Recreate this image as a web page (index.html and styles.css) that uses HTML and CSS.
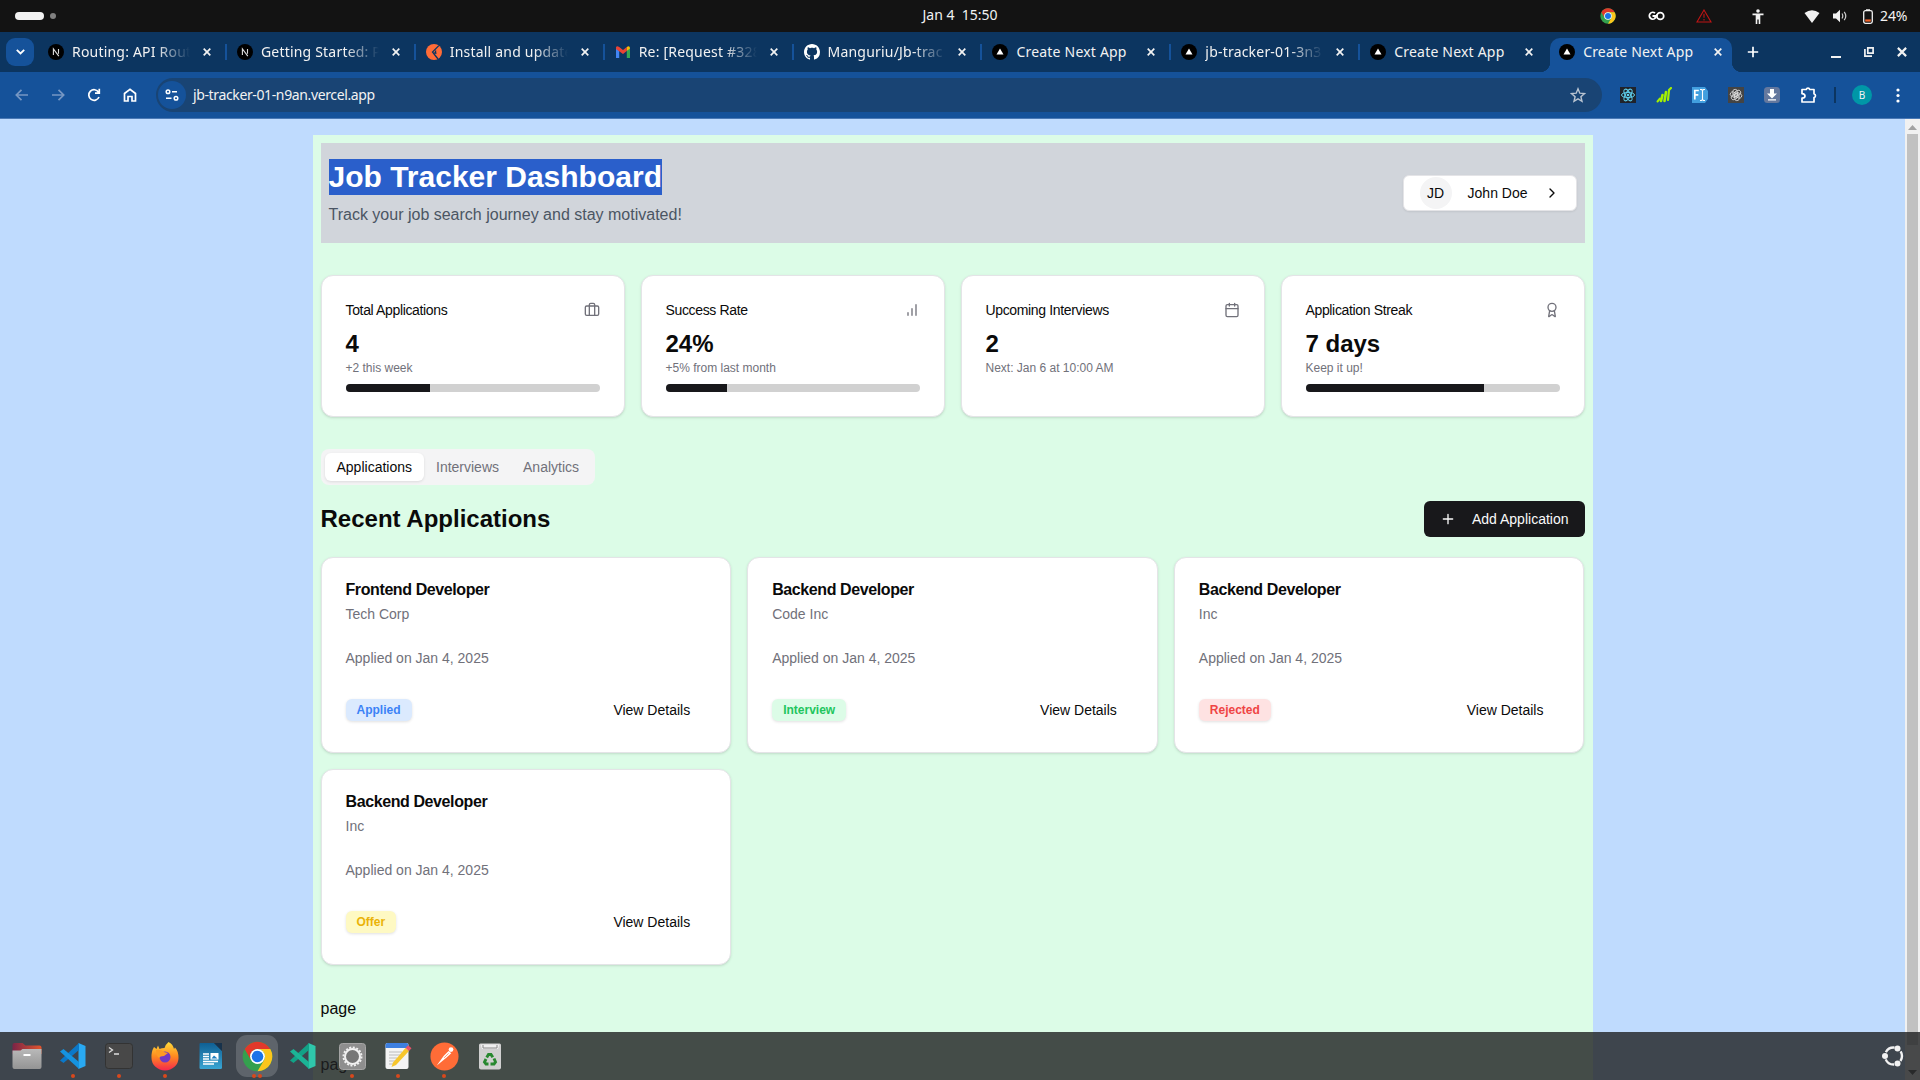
FILE: index.html
```html
<!DOCTYPE html>
<html lang="en">
<head>
<meta charset="utf-8">
<title>Create Next App</title>
<link rel="stylesheet" href="styles.css">
</head>
<body>
<svg class="defs" aria-hidden="true">
  <defs>
    <linearGradient id="gOrange" x1="0" y1="0" x2="0" y2="1"><stop offset="0" stop-color="#ffdc3a"/><stop offset=".5" stop-color="#ff8a1f"/><stop offset="1" stop-color="#f5264f"/></linearGradient>
    <linearGradient id="gGrey" x1="0" y1="0" x2="0" y2="1"><stop offset="0" stop-color="#b9b9b9"/><stop offset="1" stop-color="#949494"/></linearGradient>
    <linearGradient id="gFolder" x1="0" y1="0" x2="1" y2="0"><stop offset="0" stop-color="#7b2447"/><stop offset="1" stop-color="#e2552d"/></linearGradient>
    <linearGradient id="gDoc" x1="0" y1="0" x2="0" y2="1"><stop offset="0" stop-color="#0f5f93"/><stop offset="1" stop-color="#39a5d3"/></linearGradient>
    <symbol id="chrome" viewBox="0 0 48 48">
      <circle cx="24" cy="24" r="23" fill="#34a04e"/>
      <path d="M4.1 12.5A23 23 0 0 1 43.9 12.5H24A11.5 11.5 0 0 0 14 29.7z" fill="#e1382b"/>
      <path d="M43.9 12.5A23 23 0 0 1 24 47L34 29.7A11.5 11.5 0 0 0 24 12.5z" fill="#fcc51b"/>
      <circle cx="24" cy="24" r="11.5" fill="#fff"/><circle cx="24" cy="24" r="9" fill="#1a73e8"/>
    </symbol>
    <symbol id="next" viewBox="0 0 16 16"><circle cx="8" cy="8" r="8" fill="#000"/><path d="M5.4 11V5L10.8 12.2M10.5 5v4.8" fill="none" stroke="#ddd" stroke-width="1.1"/></symbol>
    <symbol id="vercel" viewBox="0 0 16 16"><circle cx="8" cy="8" r="8" fill="#000"/><path d="M8 4.6 11.5 10.6h-7z" fill="#fff"/></symbol>
    <symbol id="postman" viewBox="0 0 32 32"><circle cx="16" cy="16" r="15.5" fill="#ff6c37"/><path d="M7.500 26 15 15.500 20.500 10l3 2.500-5.500 5z" fill="#fff"/><circle cx="23.200" cy="8.300" r="2.600" fill="#fff"/><path d="M15.500 17.500l5-5" stroke="#ff6c37" stroke-width=".8"/></symbol>
    <symbol id="close" viewBox="0 0 8 8"><path d="M.7.7l6.600 6.600M7.300.7.7 7.300" stroke="currentColor" stroke-width="1.700"/></symbol>
    <symbol id="vscode" viewBox="0 0 28 28"><path d="M19.500 1 26.500 4v20l-7 3z" fill="#29a9f2"/><path d="M20 1v7L4.500 21 1 18.600z" fill="#0b78c8"/><path d="M20 27v-7L4.500 7 1 9.400z" fill="#1593e0"/></symbol>
    <symbol id="vscodium" viewBox="0 0 28 28"><path d="M19.500 1 26.500 4v20l-7 3z" fill="#2fc7ab"/><path d="M20 1v7L4.500 21 1 18.600z" fill="#12a287"/><path d="M20 27v-7L4.500 7 1 9.400z" fill="#1bb496"/></symbol>
  </defs>
</svg>

<header class="sysbar">
  <div class="workspaces"><span class="pill"></span><span class="dot"></span></div>
  <time class="clock">Jan 4&nbsp; 15:50</time>
  <div class="tray">
    <span class="cell w48"><svg width="16" height="16"><use href="#chrome"/></svg></span>
    <span class="cell w48"><svg width="17" height="10" viewBox="0 0 17 10" fill="none" stroke="#fff" stroke-width="1.800"><path d="M7 2.200A3.400 3.400 0 1 0 7.300 7V5H4.500"/><circle cx="12.300" cy="5" r="3.400"/><path d="M7.300 7 9.300 3.500"/></svg></span>
    <span class="cell w48"><svg width="16" height="14" viewBox="0 0 16 14" fill="none" stroke="#c01414" stroke-width="1.100"><path d="M8 1 15 13H1zM8 4.800v4M8 10v1.500"/></svg></span>
    <span class="cell w60"><svg width="14" height="15" viewBox="0 0 14 15" fill="#f2f2f2"><circle cx="7" cy="2" r="1.800"/><path d="M1.500 4.600h11v1.600H9.300V15H7.700V10.500H6.300V15H4.700V6.200H1.500z"/></svg></span>
    <span class="cell w48"><svg width="16" height="13" viewBox="0 0 16 13"><path d="M8 13 .5 3Q8-2.400 15.500 3z" fill="#f2f2f2"/></svg></span>
    <span class="cell w8"><svg width="15" height="14" viewBox="0 0 15 14"><path d="M0 4.500h3L7 .8v12.400L3 9.500H0z" fill="#f2f2f2"/><path d="M9 4.500q1.600 2.500 0 5M11.200 2.800q3.200 4.200 0 8.400" fill="none" stroke="#ccc" stroke-width="1.200"/></svg></span>
    <span class="cell w48"><svg width="10" height="15" viewBox="0 0 10 15"><rect x=".7" y="1.700" width="8.600" height="12.600" rx="1.800" fill="none" stroke="#f2f2f2" stroke-width="1.300"/><path d="M3 1h4" stroke="#f2f2f2" stroke-width="1.500"/><path d="M2.200 11.500h5.600" stroke="#f0632a" stroke-width="2.200"/></svg></span>
    <span class="battery">24%</span>
  </div>
</header>

<nav class="tabstrip">
  <button class="tabsearch"><svg width="9" height="6" viewBox="0 0 9 6"><path d="M.8.8 4.500 4.500 8.200.8" fill="none" stroke="#fff" stroke-width="1.800"/></svg></button>
  <div class="tabs">
    <div class="tab"><svg class="fav"><use href="#next"/></svg><span class="label">Routing: API Rout</span><svg class="x"><use href="#close"/></svg></div>
    <div class="tab"><svg class="fav"><use href="#next"/></svg><span class="label">Getting Started: P</span><svg class="x"><use href="#close"/></svg></div>
    <div class="tab"><svg class="fav" viewBox="0 0 16 16"><circle cx="8" cy="8" r="8" fill="#ff6c37"/><path d="M12.800 1.600 6.500 8l5.500 7" fill="none" stroke="#0c3560" stroke-width="1.300"/><path d="M10 5.500 7.800 9.500l2.700.5z" fill="#0c3560"/></svg><span class="label">Install and update</span><svg class="x"><use href="#close"/></svg></div>
    <div class="tab"><svg class="fav" viewBox="0 0 16 16"><path d="M1 3v11h3.200V7z" fill="#4285f4"/><path d="M15 3v11h-3.200V7z" fill="#34a853"/><path d="M1 3.500Q1.500 1.500 4.200 3L8 6l3.800-3v4L8 10 1 5z" fill="#ea4335"/><path d="M11.800 3Q14.800 1.200 15 4.500L11.800 7z" fill="#fbbc04"/></svg><span class="label">Re: [Request #328</span><svg class="x"><use href="#close"/></svg></div>
    <div class="tab"><svg class="fav" viewBox="0 0 16 16"><path fill="#fff" d="M8 0C3.580 0 0 3.580 0 8c0 3.540 2.290 6.530 5.470 7.590.4.070.55-.17.55-.38 0-.19-.01-.82-.01-1.490-2.010.37-2.530-.49-2.690-.94-.09-.23-.48-.94-.82-1.130-.28-.15-.68-.52-.01-.53.63-.01 1.080.58 1.230.82.72 1.210 1.870.87 2.330.66.07-.52.28-.87.51-1.070-1.780-.2-3.640-.89-3.640-3.950 0-.87.31-1.590.82-2.150-.08-.2-.36-1.020.08-2.120 0 0 .67-.21 2.200.82.640-.18 1.320-.27 2-.27s1.360.09 2 .27c1.530-1.040 2.200-.82 2.200-.82.44 1.100.16 1.920.08 2.120.51.56.82 1.270.82 2.150 0 3.070-1.870 3.750-3.650 3.950.29.25.54.73.54 1.480 0 1.070-.01 1.930-.01 2.200 0 .21.15.46.55.38A8.010 8.010 0 0 0 16 8c0-4.420-3.580-8-8-8z"/></svg><span class="label">Manguriu/Jb-trac</span><svg class="x"><use href="#close"/></svg></div>
    <div class="tab"><svg class="fav"><use href="#vercel"/></svg><span class="label">Create Next App</span><svg class="x"><use href="#close"/></svg></div>
    <div class="tab"><svg class="fav"><use href="#vercel"/></svg><span class="label">jb-tracker-01-3n3i</span><svg class="x"><use href="#close"/></svg></div>
    <div class="tab"><svg class="fav"><use href="#vercel"/></svg><span class="label">Create Next App</span><svg class="x"><use href="#close"/></svg></div>
    <div class="tab active"><svg class="fav"><use href="#vercel"/></svg><span class="label">Create Next App</span><svg class="x"><use href="#close"/></svg></div>
  </div>
  <span class="newtab"><svg width="12" height="12" viewBox="0 0 12 12"><path d="M6 .8v10.400M.8 6h10.400" stroke="#fff" stroke-width="1.700"/></svg></span>
  <div class="winctl">
    <svg width="10" height="12" viewBox="0 0 10 12"><path d="M0 11h10" stroke="#f2f2f2" stroke-width="2"/></svg>
    <svg width="10" height="10" viewBox="0 0 10 10" fill="none" stroke="#f2f2f2" stroke-width="1.700"><path d="M3.800.9h5.300v5.300H3.800zM.9 2v7.100H8"/></svg>
    <svg width="10" height="10" viewBox="0 0 8 8" color="#f2f2f2"><use href="#close"/></svg>
  </div>
</nav>

<div class="toolbar">
  <div class="navbtns">
    <svg class="dim" width="14" height="12" viewBox="0 0 14 12"><path d="M13 6H1.500M6.500.8 1.300 6l5.200 5.200"/></svg>
    <svg class="dim" width="14" height="12" viewBox="0 0 14 12"><path d="M1 6h11.500M7.500.8 12.700 6l-5.200 5.200"/></svg>
    <svg width="14" height="14" viewBox="0 0 14 14"><path d="M12 9A5.300 5.300 0 1 1 11.600 4.200M12.300.8v4.400H8"/></svg>
    <svg width="14" height="14" viewBox="0 0 14 14"><path d="M1.500 13V5.500L7 1.300l5.500 4.200V13H9V8.500H5V13z"/></svg>
  </div>
  <div class="omnibox">
    <span class="siteinfo"><svg width="14" height="12" viewBox="0 0 14 12" fill="none" stroke="#fff" stroke-width="1.500"><circle cx="3" cy="2.800" r="1.800"/><path d="M7 2.800h5M1 9.200h5.500"/><circle cx="11" cy="9.200" r="1.800"/></svg></span>
    <span class="url">jb-tracker-01-n9an.vercel.app</span>
    <svg class="star" width="16" height="16" viewBox="0 0 16 16"><path d="M8 1.800 9.800 6.200l4.700.4-3.600 3.100 1.100 4.600L8 11.800l-4 2.500 1.100-4.600L1.500 6.600l4.700-.4z" fill="none" stroke="#b9c4d1" stroke-width="1.400"/></svg>
  </div>
  <div class="exts">
    <span class="ext"><svg width="16" height="16" viewBox="0 0 16 16"><path d="M0 0h16v16H0z" fill="#20232a"/><g fill="none" stroke="#5fd0ee" stroke-width="1"><ellipse cx="8" cy="8" rx="6.500" ry="2.600"/><ellipse cx="8" cy="8" rx="6.500" ry="2.600" transform="rotate(60 8 8)"/><ellipse cx="8" cy="8" rx="6.500" ry="2.600" transform="rotate(120 8 8)"/></g><circle cx="8" cy="8" r="1.300" fill="#5fd0ee"/></svg></span>
    <span class="ext"><svg width="16" height="16" viewBox="0 0 16 16" fill="none" stroke="#a4f000" stroke-linecap="round"><path d="M1.500 14.500 4 11.500" stroke-width="2"/><path d="M5 14 6.500 8" stroke-width="2.600"/><path d="M8.500 14 10 5" stroke-width="2.600"/><path d="M12 13 13 3l2-2" stroke-width="2.200"/></svg></span>
    <span class="ext"><svg width="16" height="16" viewBox="0 0 16 16"><path d="M0 0h13l3 4v8l-3 4H0z" fill="#429fdf"/><path d="M2.800 12.500v-9h4M2.800 7.800h3.500" fill="none" stroke="#fff" stroke-width="1.700"/><path d="M8 2.500h1.500l1 1 1-1H13M8 13.500h1.500l1-1 1 1H13M10.500 3.500v9" fill="none" stroke="#fff" stroke-width="1.100"/></svg></span>
    <span class="ext"><svg width="16" height="16" viewBox="0 0 16 16"><path d="M0 0h16v16H0z" fill="#444"/><g fill="none" stroke="#ddd" stroke-width=".8"><rect x="4.800" y="2.300" width="4.600" height="7.400" rx="2.300"/><rect x="4.800" y="2.300" width="4.600" height="7.400" rx="2.300" transform="rotate(60 8 8)"/><rect x="4.800" y="2.300" width="4.600" height="7.400" rx="2.300" transform="rotate(120 8 8)"/><rect x="4.800" y="2.300" width="4.600" height="7.400" rx="2.300" transform="rotate(180 8 8)"/><rect x="4.800" y="2.300" width="4.600" height="7.400" rx="2.300" transform="rotate(240 8 8)"/><rect x="4.800" y="2.300" width="4.600" height="7.400" rx="2.300" transform="rotate(300 8 8)"/></g></svg></span>
    <span class="ext"><svg width="16" height="16" viewBox="0 0 16 16"><rect width="16" height="16" rx="3.500" fill="#64789e"/><path d="M6 2h4v4.500h3L8 11.500 3 6.500h3zM4 12.300h8v1.200H4z" fill="#fff"/></svg></span>
    <span class="ext"><svg width="18" height="18" viewBox="0 0 18 18"><path d="M2 3.500h4.200a1.900 1.900 0 0 1 3.600 0H14v4.300a1.900 1.900 0 0 1 0 3.700V16H2v-3.800q3-.2 3-2.200t-3-2.300z" fill="none" stroke="#fff" stroke-width="1.700" stroke-linejoin="round"/></svg></span>
    <span class="vsep"></span>
    <span class="avatar">B</span>
    <svg class="kebab" width="4" height="15" viewBox="0 0 4 15" fill="#fff"><circle cx="2" cy="2" r="1.600"/><circle cx="2" cy="7.500" r="1.600"/><circle cx="2" cy="13" r="1.600"/></svg>
  </div>
</div>

<div class="viewport">
  <div class="page">
    <main class="container">
      <section class="hero">
        <div>
          <h1><span class="selected">Job Tracker Dashboard</span></h1>
          <p class="tagline">Track your job search journey and stay motivated!</p>
        </div>
        <button class="profile"><span class="initials">JD</span><span class="name">John Doe</span><svg class="lucide dark" viewBox="0 0 24 24"><path d="m9 18 6-6-6-6"/></svg></button>
      </section>

      <section class="stats">
        <article class="card">
          <div class="stat-head"><h3>Total Applications</h3><svg class="lucide" viewBox="0 0 24 24"><rect width="20" height="14" x="2" y="6" rx="2"/><path d="M16 20V4a2 2 0 0 0-2-2h-4a2 2 0 0 0-2 2v16"/></svg></div>
          <div class="value">4</div><p class="hint">+2 this week</p>
          <div class="bar"><div class="fill" style="width:33.300%"></div></div>
        </article>
        <article class="card">
          <div class="stat-head"><h3>Success Rate</h3><svg class="lucide" viewBox="0 0 24 24"><path d="M12 20V10M18 20V4M6 20v-4"/></svg></div>
          <div class="value">24%</div><p class="hint">+5% from last month</p>
          <div class="bar"><div class="fill" style="width:24.300%"></div></div>
        </article>
        <article class="card">
          <div class="stat-head"><h3>Upcoming Interviews</h3><svg class="lucide" viewBox="0 0 24 24"><path d="M8 2v4M16 2v4M3 10h18"/><rect width="18" height="18" x="3" y="4" rx="2"/></svg></div>
          <div class="value">2</div><p class="hint">Next: Jan 6 at 10:00 AM</p>
        </article>
        <article class="card">
          <div class="stat-head"><h3>Application Streak</h3><svg class="lucide" viewBox="0 0 24 24"><path d="m15.477 12.890 1.515 8.526a.5.5 0 0 1-.81.470l-3.580-2.687a1 1 0 0 0-1.197 0l-3.586 2.686a.5.5 0 0 1-.81-.469l1.514-8.526"/><circle cx="12" cy="8" r="6"/></svg></div>
          <div class="value">7 days</div><p class="hint">Keep it up!</p>
          <div class="bar"><div class="fill" style="width:70.300%"></div></div>
        </article>
      </section>

      <div class="segmented"><button class="on">Applications</button><button>Interviews</button><button>Analytics</button></div>

      <div class="section-head">
        <h2>Recent Applications</h2>
        <button class="add"><svg class="lucide" viewBox="0 0 24 24"><path d="M5 12h14M12 5v14"/></svg>Add Application</button>
      </div>

      <section class="jobs">
        <article class="card job"><h3>Frontend Developer</h3><p class="company">Tech Corp</p><p class="date">Applied on Jan 4, 2025</p><div class="foot"><span class="badge applied">Applied</span><button class="ghost">View Details</button></div></article>
        <article class="card job"><h3>Backend Developer</h3><p class="company">Code Inc</p><p class="date">Applied on Jan 4, 2025</p><div class="foot"><span class="badge interview">Interview</span><button class="ghost">View Details</button></div></article>
        <article class="card job"><h3>Backend Developer</h3><p class="company">Inc</p><p class="date">Applied on Jan 4, 2025</p><div class="foot"><span class="badge rejected">Rejected</span><button class="ghost">View Details</button></div></article>
        <article class="card job"><h3>Backend Developer</h3><p class="company">Inc</p><p class="date">Applied on Jan 4, 2025</p><div class="foot"><span class="badge offer">Offer</span><button class="ghost">View Details</button></div></article>
      </section>
      <div class="note">page</div>
      <div class="note">page</div>
    </main>
  </div>
  <div class="scrollbar">
    <svg width="9" height="5" viewBox="0 0 9 5"><path d="M4.500 0 9 5H0z" fill="#a3a3a3"/></svg>
    <div class="thumb"></div>
    <svg class="down" width="9" height="5" viewBox="0 0 9 5"><path d="M4.500 5 0 0h9z" fill="#505050"/></svg>
  </div>
</div>

<footer class="dock">
  <div class="apps">
    <span class="app"><svg width="30" height="28" viewBox="0 0 30 28"><path d="M.5 3a2 2 0 0 1 2-2h8l3 2.500h14a2 2 0 0 1 2 2V12H.5z" fill="url(#gFolder)"/><path d="M.5 8.500h8l2-1.500h19v18a2 2 0 0 1-2 2h-25a2 2 0 0 1-2-2z" fill="url(#gGrey)"/><path d="M11.500 13h7" stroke="#fff" stroke-width="2"/></svg></span>
    <span class="app run"><svg width="28" height="28"><use href="#vscode"/></svg></span>
    <span class="app run"><svg width="28" height="26" viewBox="0 0 28 26"><rect x=".5" y=".5" width="27" height="25" rx="3" fill="#484848" stroke="#333"/><path d="M4 4.500 7.500 7 4 9.500M9 11h5" fill="none" stroke="#ddd" stroke-width="1.300"/></svg></span>
    <span class="app run"><svg width="28" height="30" viewBox="0 0 28 30"><path d="M3 6q-3 5-2.500 11a13.500 12.500 0 0 0 27 0Q27.500 10 24 6.500L23 8Q22 3 17.500 1q-3.500 3-4 6-3 0-5 1L7 4.500 5.500 8z" fill="url(#gOrange)"/><circle cx="14" cy="16" r="5.500" fill="#7139c4"/><path d="M5 9q5-1 8 2l4 1-4 3q-4 0-5 2-3-3-3-8" fill="#ff9b22"/></svg></span>
    <span class="app"><svg width="24" height="28" viewBox="0 0 24 28"><path d="M1.500 1H15l8 8v16.500q0 1.500-1.500 1.500h-20Q.5 27 .5 25.500V2q0-1 1-1z" fill="url(#gDoc)"/><path d="M15 1h8v8z" fill="#17324b"/><path d="M4 12h6M4 14.500h6M4 17h6M4 19.500h15M4 22h11" stroke="#fff" stroke-width="1.300"/><path d="M11.500 11h8v6.500h-8z" fill="#fff"/><path d="M12.500 16.500 15 13.500l3.500 3z" fill="#1e7fc0"/></svg></span>
    <span class="app focus"><svg width="31" height="31"><use href="#chrome"/></svg><i class="twin"></i></span>
    <span class="app"><svg width="28" height="28"><use href="#vscodium"/></svg></span>
    <span class="gap"></span>
    <span class="app run"><svg width="27" height="27" viewBox="0 0 27 27"><rect x=".5" y=".5" width="26" height="26" rx="3" fill="#8e8e8e" stroke="#a5a5a5"/><circle cx="13.500" cy="13.500" r="7.500" fill="#777" stroke="#f1f1f1" stroke-width="2"/><circle cx="13.500" cy="13.500" r="9" fill="none" stroke="#f1f1f1" stroke-width="2" stroke-dasharray="2 1.534"/></svg></span>
    <span class="app run"><svg width="28" height="28" viewBox="0 0 28 28"><rect x="1.500" y="1" width="23" height="26" rx="2" fill="#f4f4f4"/><path d="M1.500 6V3q0-2 2-2h19q2 0 2 2v3z" fill="#3d7fe0"/><path d="M5 10h13M5 13h11M5 16h8M5 19h6M5 22h5" stroke="#bbb" stroke-width="1.200"/><path d="M7.500 25 9 20.500 21.500 6l3.500 3L12 23z" fill="#f7c62c"/><path d="M21.500 6 24 3.200l3.500 3L25 9z" fill="#e8526a"/></svg></span>
    <span class="app run"><svg width="29" height="29"><use href="#postman"/></svg></span>
    <span class="app"><svg width="24" height="27" viewBox="0 0 24 27"><path d="M1 2q0-1.500 1.500-1.500h19Q23 .5 23 2v22.500q0 2-2 2H3q-2 0-2-2z" fill="#d0d0d0"/><path d="M2.500 1.500h19L20 6H4z" fill="#efefef"/><path d="M5 2v3h14V2" fill="none" stroke="#888"/><g fill="none" stroke="#27882f" stroke-width="2.900"><path d="M8.700 14.500 10.500 11.500h2.500l1.800 2.800M16 15.500l1.500 3.500-1.500 2h-3.500M10.500 21H8l-1.500-2L8 16"/></g></svg></span>
  </div>
  <svg class="ubuntu" width="22" height="22" viewBox="0 0 22 22"><circle cx="11.500" cy="11" r="8.500" fill="none" stroke="#f2f2f2" stroke-width="2.400" stroke-dasharray="10.500 7.300" stroke-dashoffset="5.200"/><g fill="#f2f2f2"><circle cx="3" cy="11" r="3"/><circle cx="15.500" cy="3.600" r="3"/><circle cx="15.500" cy="18.400" r="3"/></g></svg>
</footer>
</body>
</html>
```
FILE: styles.css
```css
* { box-sizing: border-box; }
html, body { margin: 0; height: 100%; overflow: hidden; }
body {
  display: flex; flex-direction: column; position: relative;
  font-family: "Liberation Sans", Arial, sans-serif; font-size: 16px; line-height: 24px; color: #0a0a0a;
}
h1, h2, h3, p { margin: 0; }
button { font: inherit; color: inherit; border: 0; padding: 0; background: none; }
svg { display: block; flex: none; }
.defs { position: absolute; width: 0; height: 0; }

/* System bar */
.sysbar, .tabstrip, .toolbar { font-family: "Noto Sans", sans-serif; font-size: 14px; color: #f2f2f2; flex: none; }
.sysbar { height: 32px; background: #131313; display: grid; grid-template-columns: 1fr auto 1fr; align-items: center; line-height: 20px; }
.workspaces { display: flex; align-items: center; gap: 6px; padding-left: 15px; }
.pill { width: 29px; height: 8px; border-radius: 4px; background: #f2f2f2; }
.dot { width: 6px; height: 6px; border-radius: 50%; background: #808080; }
.clock { font-size: 14px; padding-bottom: 2px; }
.tray { display: flex; align-items: center; justify-content: flex-end; padding-right: 12px; }
.cell { display: flex; justify-content: center; flex: none; }
.w48 { width: 48px; }
.w60 { width: 60px; }
.w8 { width: 8px; }
.battery { width: 28px; white-space: nowrap; font-size: 14px; letter-spacing: -.1px; margin-left: -12px; }

/* Browser tabs */
.tabstrip { height: 40px; background: #0c3560; display: flex; align-items: center; }
.tabsearch { width: 28px; height: 28px; margin: 0 2px 0 6px; border-radius: 9px; background: #15529a; display: flex; align-items: center; justify-content: center; }
.tabs { display: flex; }
.tab { position: relative; width: 188.900px; height: 40px; display: flex; align-items: center; padding: 0 14px 0 12px; gap: 8px; }
.tab + .tab:not(.active)::before { content: ""; position: absolute; left: 0; top: 12px; width: 2px; height: 16px; background: #15529a; }
.fav { width: 16px; height: 16px; }
.x { width: 8px; height: 8px; margin-left: auto; }
.label { width: 118px; overflow: hidden; white-space: nowrap; line-height: 20px; letter-spacing: .2px; mask-image: linear-gradient(90deg, #000 84px, transparent 118px); }
.tab:nth-child(6) .label, .tab:nth-child(8) .label, .tab:nth-child(9) .label { mask-image: none; }
.tab.active { z-index: 0; }
.tab.active::before {
  content: ""; position: absolute; z-index: -1; left: -7px; right: -6px; top: 6px; bottom: 0;
  background:
    radial-gradient(circle at 0 0, transparent 10px, #15529a 10.5px) left bottom / 10px 10px no-repeat,
    radial-gradient(circle at 100% 0, transparent 10px, #15529a 10.5px) right bottom / 10px 10px no-repeat;
}
.tab.active::after { content: ""; position: absolute; z-index: -1; left: 3px; right: 4px; top: 6px; bottom: 0; border-radius: 10px 10px 0 0; background: #15529a; }
.newtab { margin-left: 11px; }
.winctl { margin-left: auto; display: flex; align-items: center; gap: 23px; padding-right: 13px; }

/* Address bar */
.toolbar { height: 47px; background: #15529a; border-bottom: 1px solid #4a79b5; display: flex; align-items: center; }
.navbtns { width: 156px; padding-left: 15px; display: flex; align-items: center; gap: 22px; fill: none; stroke: #fff; stroke-width: 1.7; }
.dim { stroke: #7697c3; }
.omnibox { width: 1446px; height: 34px; border-radius: 17px; background: #194474; display: flex; align-items: center; padding: 0 16px 0 2px; }
.siteinfo { width: 28px; height: 28px; border-radius: 14px; background: #15529a; display: flex; align-items: center; justify-content: center; }
.url { margin-left: 7px; line-height: 20px; letter-spacing: -.37px; }
.star { margin-left: auto; }
.exts { display: flex; align-items: center; padding-left: 8px; }
.ext { width: 36px; display: flex; justify-content: center; }
.ext:nth-child(6) { padding-left: 2px; }
.vsep { width: 2px; height: 16px; background: #0c3560; margin: 0 16px 0 8px; }
.avatar { width: 20px; height: 20px; border-radius: 50%; background: #0097a7; font-size: 10px; line-height: 20px; text-align: center; }
.kebab { margin-left: 24px; }

/* Page */
.viewport { flex: 1; min-height: 0; display: flex; overflow: hidden; }
.page { flex: 1; background: #bfdbfe; padding: 16px 0; overflow: hidden; }
.container { width: 1280px; height: 1100px; margin: 0 auto; padding: 8px; background: #dcfce7; }
.scrollbar { width: 15px; background: #f1f1f1; display: flex; flex-direction: column; align-items: center; padding-top: 6px; }
.thumb { width: 11px; height: 911px; margin-top: 4px; background: #c1c1c1; }
.down { margin-top: 25px; }

.hero { height: 100px; padding: 16px 8px; background: #d1d5db; display: flex; align-items: center; justify-content: space-between; }
h1 { font-size: 30px; line-height: 36px; }
.selected { display: inline-block; background: #2a5fcb; color: #fff; vertical-align: top; }
.tagline { margin-top: 8px; color: #4b5563; }
.profile { height: 36px; display: flex; align-items: center; padding: 0 16px; border: 1px solid #e4e4e7; border-radius: 6px; background: #fff; font-size: 14px; box-shadow: 0 1px 2px rgba(0,0,0,.08); }
.initials { width: 32px; height: 32px; line-height: 32px; border-radius: 50%; background: #f4f4f5; text-align: center; }
.name { margin: 0 16px; }
.lucide { width: 16px; height: 16px; fill: none; stroke: #71717a; stroke-width: 2; stroke-linecap: round; stroke-linejoin: round; }
.lucide.dark { stroke: #0a0a0a; }

.card { background: #fff; border: 1px solid #e4e4e7; border-radius: 12px; padding: 24px; box-shadow: 0 1px 3px rgba(0,0,0,.1), 0 1px 2px -1px rgba(0,0,0,.1); }
.stats { margin-top: 32px; display: grid; grid-template-columns: repeat(4, 1fr); gap: 16px; }
.stat-head { display: flex; align-items: center; justify-content: space-between; height: 20px; margin-bottom: 8px; }
.stat-head h3 { font-size: 14px; line-height: 20px; font-weight: 400; letter-spacing: -.35px; }
.value { font-size: 24px; line-height: 32px; font-weight: 700; }
.hint { font-size: 12px; line-height: 16px; color: #71717a; }
.bar { height: 8px; margin-top: 8px; border-radius: 4px; background: #d1d1d1; overflow: hidden; }
.fill { height: 100%; background: #18181b; }

.segmented { margin-top: 32px; display: inline-flex; height: 36px; padding: 4px; border-radius: 8px; background: #f4f4f5; font-size: 14px; line-height: 20px; color: #71717a; vertical-align: top; }
.segmented button { padding: 0 12px; border-radius: 6px; }
.segmented .on { background: #fff; color: #0a0a0a; box-shadow: 0 1px 3px rgba(0,0,0,.1); }

.section-head { margin-top: 16px; height: 36px; display: flex; align-items: center; justify-content: space-between; }
h2 { font-size: 24px; line-height: 32px; }
.add { height: 36px; padding: 0 16px; border-radius: 6px; background: #18181b; color: #fafafa; font-size: 14px; display: flex; align-items: center; gap: 16px; }
.add .lucide { stroke: #fafafa; }

.jobs { margin: 20px 0 32px; display: grid; grid-template-columns: repeat(3, 1fr); gap: 16px; }
.job h3 { font-size: 16px; line-height: 16px; letter-spacing: -.4px; }
.job p { font-size: 14px; line-height: 20px; color: #71717a; }
.job .company { margin: 6px 0 24px; }
.foot { margin-top: 24px; height: 36px; display: flex; align-items: center; justify-content: space-between; font-size: 14px; }
.badge { font-size: 12px; line-height: 16px; font-weight: 700; padding: 3px 11px; border-radius: 6px; box-shadow: 0 1px 3px rgba(0,0,0,.12); }
.applied { background: #dbeafe; color: #3b82f6; }
.interview { background: #dcfce7; color: #22c55e; }
.rejected { background: #fee2e2; color: #ef4444; }
.offer { background: #fef9c3; color: #eab308; }
.ghost { padding: 0 16px; }
.note { margin-bottom: 32px; }

/* Dock floats over the page */
.dock { position: absolute; left: 0; right: 0; bottom: 0; height: 48px; background: rgba(30,31,32,.8); display: flex; align-items: center; justify-content: space-between; padding: 0 16px 0 6px; }
.apps { display: flex; align-items: center; }
.app { position: relative; width: 42px; height: 42px; margin-right: 4px; display: flex; align-items: center; justify-content: center; }
.app.focus { border-radius: 11px; background: rgba(255,255,255,.17); }
.gap { width: 3px; }
.app.run::after, .twin::before, .twin::after { content: ""; position: absolute; bottom: -1px; left: 19px; width: 4px; height: 4px; border-radius: 50%; background: #d8481c; }
.twin::before { left: 16px; }
.twin::after { left: 22px; }
```
